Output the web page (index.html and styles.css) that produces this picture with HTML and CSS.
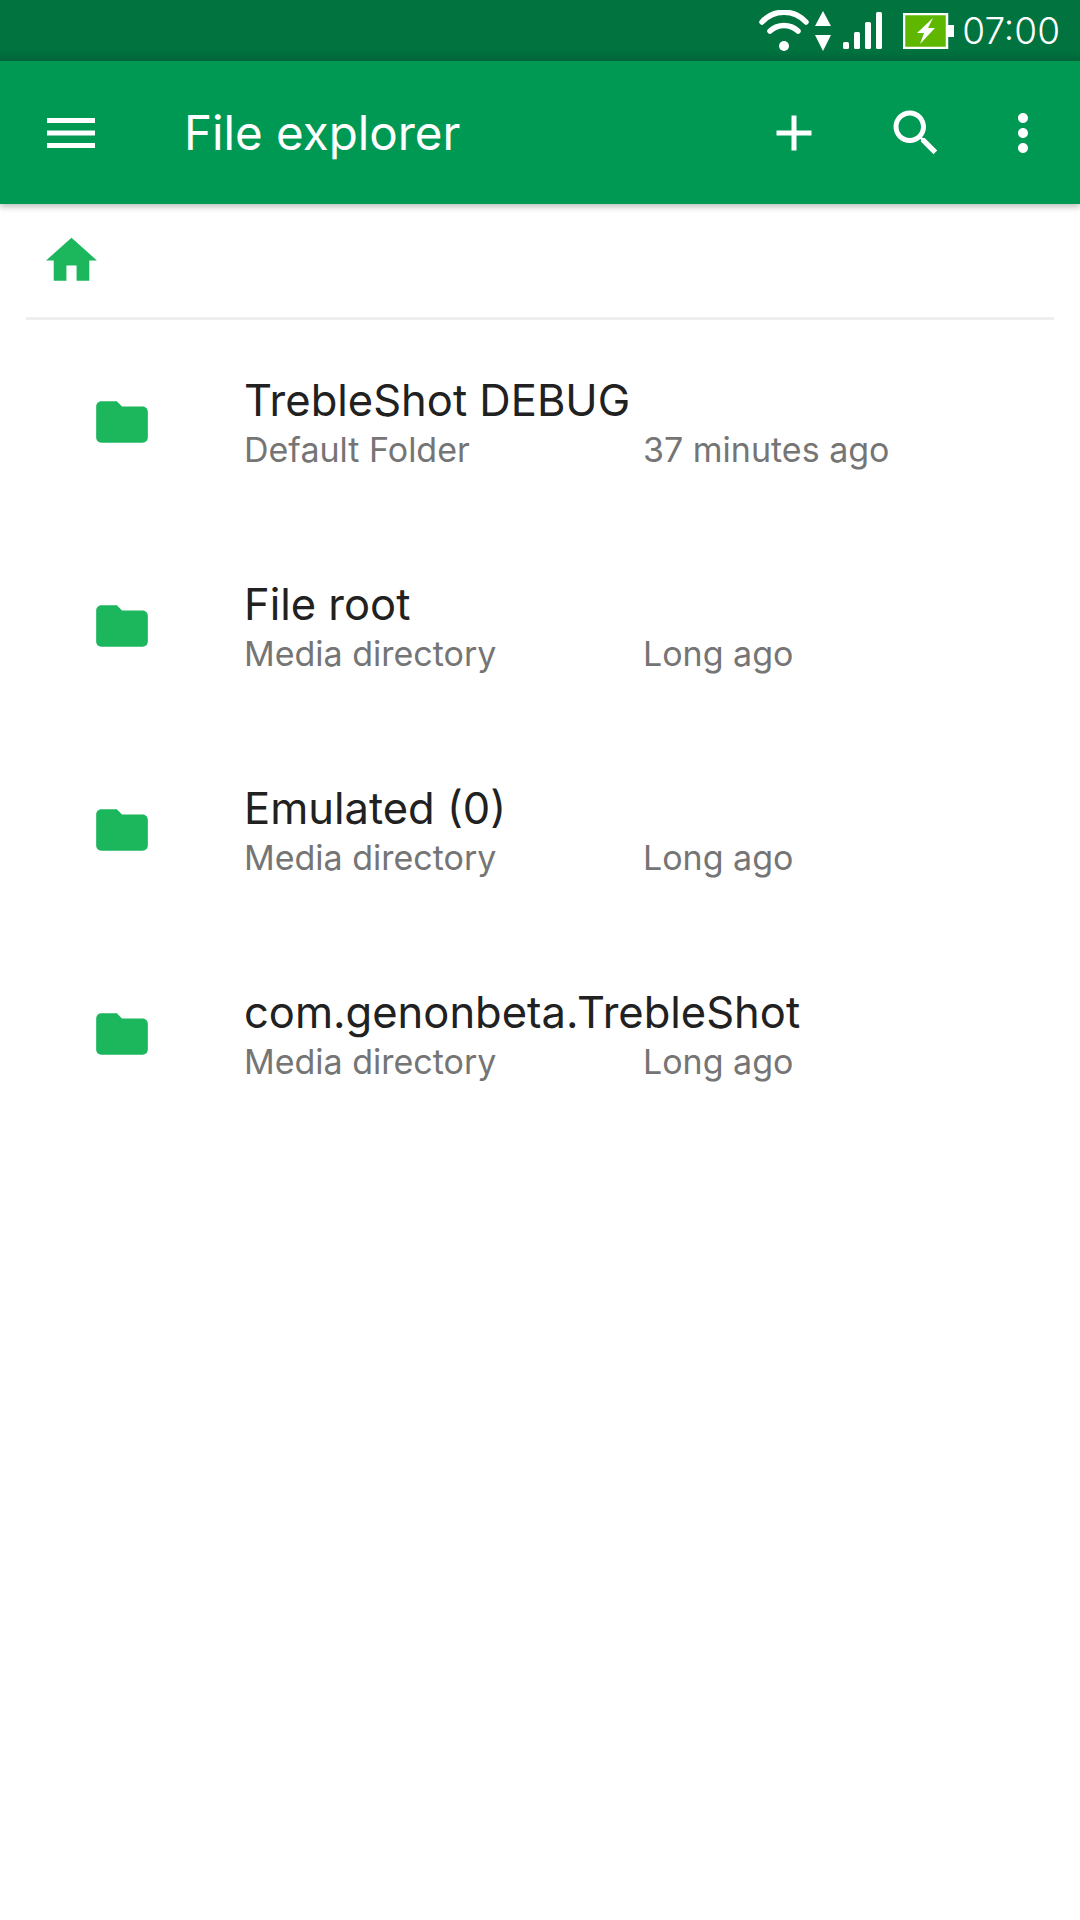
FILE: index.html
```html
<!DOCTYPE html>
<html lang="en">
<head>
    <meta charset="UTF-8">
    <meta name="viewport" content="width=device-width, initial-scale=1.0">
    <title>File explorer</title>
    <link rel="stylesheet" href="styles.css">
</head>
<body>
    <div class="status-bar">
        <svg class="status-wifi" viewBox="0 0 50 42">
            <path d="M3 12 C15 -1 35 -1 47 12" />
            <path d="M11 21 C19 13.5 31 13.5 39 21" />
            <circle cx="25" cy="36" r="5" />
        </svg>
        <svg class="status-arrows" viewBox="0 0 16 40">
            <path d="M8 0 L16 15 L0 15 Z M0 24 L16 24 L8 40 Z" />
        </svg>
        <svg class="status-signal" viewBox="0 0 40 37">
            <rect x="0" y="30" width="6" height="7" rx="1.5" />
            <rect x="11" y="20" width="6" height="17" rx="1.5" />
            <rect x="22" y="10" width="6" height="27" rx="1.5" />
            <rect x="33" y="0" width="6" height="37" rx="1.5" />
        </svg>
        <svg class="status-battery" viewBox="0 0 51 36">
            <rect class="battery-body" x="1" y="1" width="43" height="34" />
            <rect class="battery-cap" x="45" y="12" width="6" height="12" />
            <path class="battery-bolt" d="M30 5 L14 20 H21 L17 31 L32 15 H25 Z" />
        </svg>
        <span class="status-time">07:00</span>
    </div>

    <header class="app-bar">
        <svg class="bar-icon menu-icon" viewBox="0 0 24 24"><path d="M2.4 18h19.2v-2H2.4v2zm0-5h19.2v-2H2.4v2zm0-7v2h19.2V6H2.4z"/></svg>
        <h1 class="bar-title">File explorer</h1>
        <svg class="bar-icon add-icon" viewBox="0 0 24 24"><path d="M19 13h-6v6h-2v-6H5v-2h6V5h2v6h6v2z"/></svg>
        <svg class="bar-icon search-icon" viewBox="0 0 24 24"><path d="M15.5 14h-.79l-.28-.27C15.41 12.59 16 11.11 16 9.5 16 5.91 13.09 3 9.5 3S3 5.91 3 9.5 5.91 16 9.5 16c1.61 0 3.09-.59 4.23-1.57l.27.28v.79l5 4.99L20.49 19l-4.99-5zm-6 0C7.01 14 5 11.99 5 9.5S7.01 5 9.5 5 14 7.01 14 9.5 11.99 14 9.5 14z"/></svg>
        <svg class="bar-icon more-icon" viewBox="0 0 24 24"><path d="M12 8c1.1 0 2-.9 2-2s-.9-2-2-2-2 .9-2 2 .9 2 2 2zm0 2c-1.1 0-2 .9-2 2s.9 2 2 2 2-.9 2-2-.9-2-2-2zm0 6c-1.1 0-2 .9-2 2s.9 2 2 2 2-.9 2-2-.9-2-2-2z"/></svg>
    </header>

    <div class="path-bar">
        <svg class="home-icon" viewBox="0 0 24 24"><path d="M10 20v-6h4v6h5v-8h3L12 3 2 12h3v8z"/></svg>
    </div>

    <ul class="file-list">
        <li class="file-row">
            <svg class="folder-icon" viewBox="0 0 24 24"><path d="M10 4H4c-1.1 0-1.99.9-1.99 2L2 18c0 1.1.9 2 2 2h16c1.1 0 2-.9 2-2V8c0-1.1-.9-2-2-2h-8l-2-2z"/></svg>
            <div class="file-text">
                <div class="file-name">TrebleShot DEBUG</div>
                <div class="file-meta"><span class="file-kind">Default Folder</span><span>37 minutes ago</span></div>
            </div>
        </li>
        <li class="file-row">
            <svg class="folder-icon" viewBox="0 0 24 24"><path d="M10 4H4c-1.1 0-1.99.9-1.99 2L2 18c0 1.1.9 2 2 2h16c1.1 0 2-.9 2-2V8c0-1.1-.9-2-2-2h-8l-2-2z"/></svg>
            <div class="file-text">
                <div class="file-name">File root</div>
                <div class="file-meta"><span class="file-kind">Media directory</span><span>Long ago</span></div>
            </div>
        </li>
        <li class="file-row">
            <svg class="folder-icon" viewBox="0 0 24 24"><path d="M10 4H4c-1.1 0-1.99.9-1.99 2L2 18c0 1.1.9 2 2 2h16c1.1 0 2-.9 2-2V8c0-1.1-.9-2-2-2h-8l-2-2z"/></svg>
            <div class="file-text">
                <div class="file-name">Emulated (0)</div>
                <div class="file-meta"><span class="file-kind">Media directory</span><span>Long ago</span></div>
            </div>
        </li>
        <li class="file-row">
            <svg class="folder-icon" viewBox="0 0 24 24"><path d="M10 4H4c-1.1 0-1.99.9-1.99 2L2 18c0 1.1.9 2 2 2h16c1.1 0 2-.9 2-2V8c0-1.1-.9-2-2-2h-8l-2-2z"/></svg>
            <div class="file-text">
                <div class="file-name">com.genonbeta.TrebleShot</div>
                <div class="file-meta"><span class="file-kind">Media directory</span><span>Long ago</span></div>
            </div>
        </li>
    </ul>
</body>
</html>
```

FILE: styles.css
```css
* {
    box-sizing: border-box;
}
body {
    margin: 0;
    width: 1080px;
    height: 1920px;
    overflow: hidden;
    background: #fff;
    font-family: Inter, "Open Sans", sans-serif;
}
.status-bar {
    height: 61px;
    display: flex;
    align-items: center;
    justify-content: flex-end;
    padding-right: 20px;
    background: linear-gradient(to bottom, #00733f 0, #00733f 50px, #00663a 61px);
    color: #fff;
}
.status-bar svg {
    display: block;
    fill: #fff;
}
.status-wifi {
    width: 50px;
    height: 42px;
    margin-right: 6px;
}
.status-wifi path {
    fill: none;
    stroke: #fff;
    stroke-width: 5.5;
    stroke-linecap: round;
}
.status-arrows {
    width: 16px;
    height: 40px;
    margin-right: 12px;
}
.status-signal {
    width: 40px;
    height: 37px;
    margin-right: 20px;
}
.status-battery {
    width: 51px;
    height: 36px;
    margin-right: 8px;
}
.status-bar .battery-body {
    fill: #5fb700;
    stroke: #fff;
    stroke-width: 2.5;
}
.status-time {
    font-size: 37px;
    font-weight: 300;
    line-height: 40px;
}
.app-bar {
    height: 143px;
    display: flex;
    align-items: center;
    background: #009954;
    color: #fff;
    box-shadow: 0 3px 6px rgba(0, 0, 0, 0.25);
    position: relative;
}
.bar-icon {
    display: block;
    width: 60px;
    height: 60px;
    fill: #fff;
    flex: none;
}
.menu-icon {
    margin-left: 41px;
}
.bar-title {
    flex: 1;
    margin: 0 0 0 83px;
    font-size: 47.5px;
    font-weight: 400;
}
.add-icon {
    margin-right: 62px;
}
.search-icon {
    margin-right: 47px;
}
.more-icon {
    margin-right: 27px;
}
.path-bar {
    height: 116px;
    margin: 0 26px;
    padding: 26px 0 0 15px;
    border-bottom: 3px solid #eeeeee;
}
.home-icon {
    display: block;
    width: 61px;
    height: 61px;
    fill: #1cb65d;
}
.file-list {
    list-style: none;
    margin: 0;
    padding: 0;
}
.file-row {
    height: 204px;
    display: flex;
    align-items: center;
    padding-left: 91px;
}
.folder-icon {
    display: block;
    width: 62px;
    height: 62px;
    fill: #1cb65d;
    flex: none;
}
.file-text {
    margin-left: 91px;
    padding-top: 6px;
}
.file-name {
    font-size: 43.5px;
    line-height: 50px;
    color: #212121;
}
.file-meta {
    display: flex;
    font-size: 34px;
    line-height: 50px;
    color: #757575;
}
.file-kind {
    width: 399px;
}
```
